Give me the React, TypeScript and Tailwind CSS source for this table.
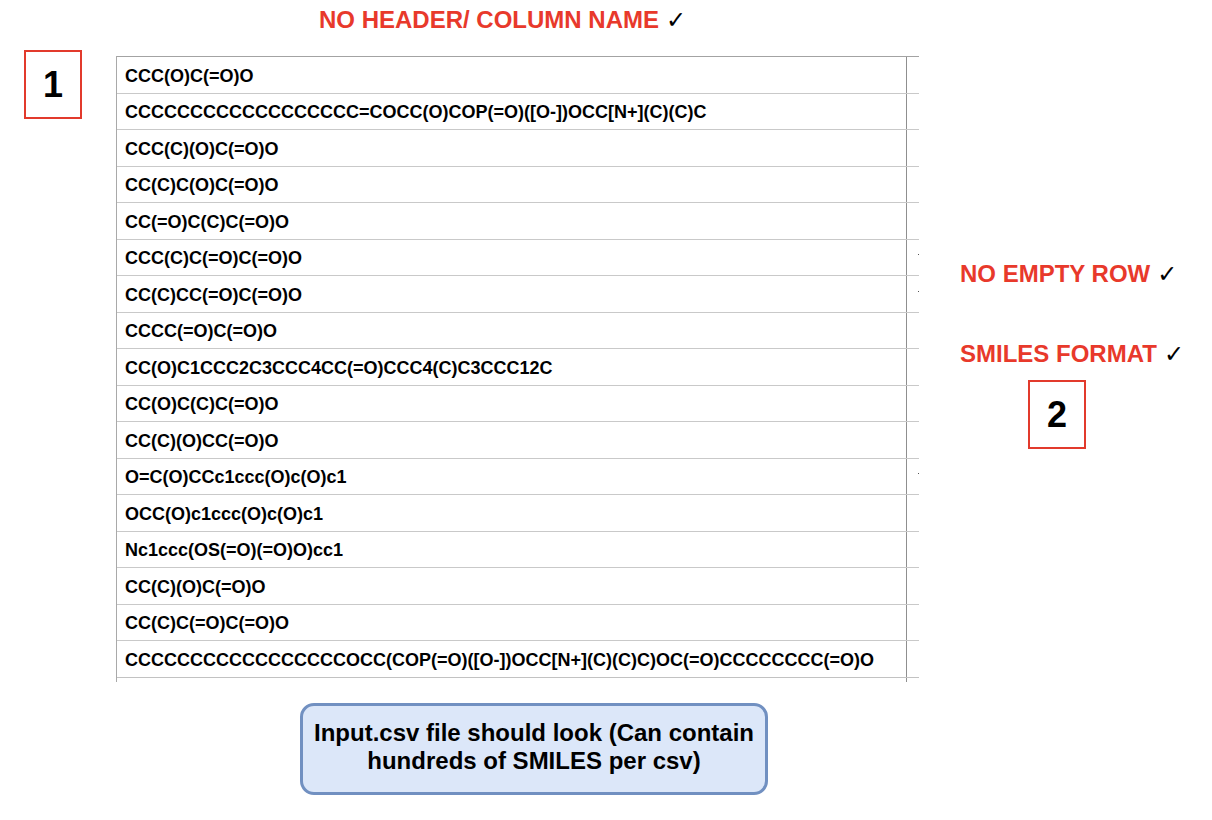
import React from "react";

const rows = [
  "CCC(O)C(=O)O",
  "CCCCCCCCCCCCCCCCCC=COCC(O)COP(=O)([O-])OCC[N+](C)(C)C",
  "CCC(C)(O)C(=O)O",
  "CC(C)C(O)C(=O)O",
  "CC(=O)C(C)C(=O)O",
  "CCC(C)C(=O)C(=O)O",
  "CC(C)CC(=O)C(=O)O",
  "CCCC(=O)C(=O)O",
  "CC(O)C1CCC2C3CCC4CC(=O)CCC4(C)C3CCC12C",
  "CC(O)C(C)C(=O)O",
  "CC(C)(O)CC(=O)O",
  "O=C(O)CCc1ccc(O)c(O)c1",
  "OCC(O)c1ccc(O)c(O)c1",
  "Nc1ccc(OS(=O)(=O)O)cc1",
  "CC(C)(O)C(=O)O",
  "CC(C)C(=O)C(=O)O",
  "CCCCCCCCCCCCCCCCCOCC(COP(=O)([O-])OCC[N+](C)(C)C)OC(=O)CCCCCCCC(=O)O",
];

const dotRows = [5, 6, 11];

function Check() {
  return (
    <span className="font-['DejaVu_Sans',sans-serif] font-bold text-black text-[24px] leading-[28px] ml-[7px]">
      ✓
    </span>
  );
}

export default function App() {
  return (
    <div className="w-[1212px] h-[820px] bg-white font-['Liberation_Sans',Arial,sans-serif] overflow-hidden">
      <div className="pl-[319px] pt-[6px] flex items-center">
        <span className="text-[24px] leading-[28px] font-bold text-[#e8392b]">NO HEADER/ COLUMN NAME</span>
        <Check />
      </div>
      <div className="h-[16px]" />
      <div className="flex">
        <div className="ml-[24px] w-[58px] h-[69px] border-2 border-[#e23a2c] flex items-center justify-center text-[36px] font-bold text-black">
          1
        </div>
        <div className="ml-[34px] mt-[6px] w-[803px] border-l border-[#a9a9a9]">
          {rows.map((r, i) => (
            <div
              key={i}
              className={
                "flex h-[36.5px] border-t " +
                (i === 0 ? "border-[#a3a3a3]" : "border-[#c9c9c9]")
              }
            >
              <div className="w-[790px] border-r border-[#8f8f8f] pl-[8px] pt-[3px] flex items-center text-[18px] font-bold text-black whitespace-nowrap overflow-hidden">
                {r}
              </div>
              <div className="w-[12px] flex items-center">
                {dotRows.includes(i) && <div className="ml-[11px] mb-[5px] w-[1px] h-[1px] bg-[#555]" />}
              </div>
            </div>
          ))}
          <div className="flex h-[5px] border-t border-[#c2c2c2]">
            <div className="w-[790px] border-r border-[#8f8f8f]" />
          </div>
        </div>
        <div className="ml-[41px] flex flex-col">
          <div className="mt-[210px] flex items-center h-[28px]">
            <span className="text-[24px] leading-[28px] font-bold text-[#e8392b]">NO EMPTY ROW</span>
            <Check />
          </div>
          <div className="mt-[52px] flex items-center h-[28px]">
            <span className="text-[24px] leading-[28px] font-bold text-[#e8392b]">SMILES FORMAT</span>
            <Check />
          </div>
          <div className="mt-[12px] ml-[68px] w-[58px] h-[69px] border-2 border-[#e23a2c] flex items-center justify-center text-[36px] font-bold text-black">
            2
          </div>
        </div>
      </div>
      <div className="ml-[300px] mt-[21px] w-[468px] h-[92px] rounded-[14px] border-[3px] border-[#7190c1] bg-[#dce7f9] flex items-center justify-center text-center pb-[4px]">
        <div className="text-[24px] leading-[28px] font-bold text-black">
          Input.csv file should look (Can contain
          <br />
          hundreds of SMILES per csv)
        </div>
      </div>
    </div>
  );
}
